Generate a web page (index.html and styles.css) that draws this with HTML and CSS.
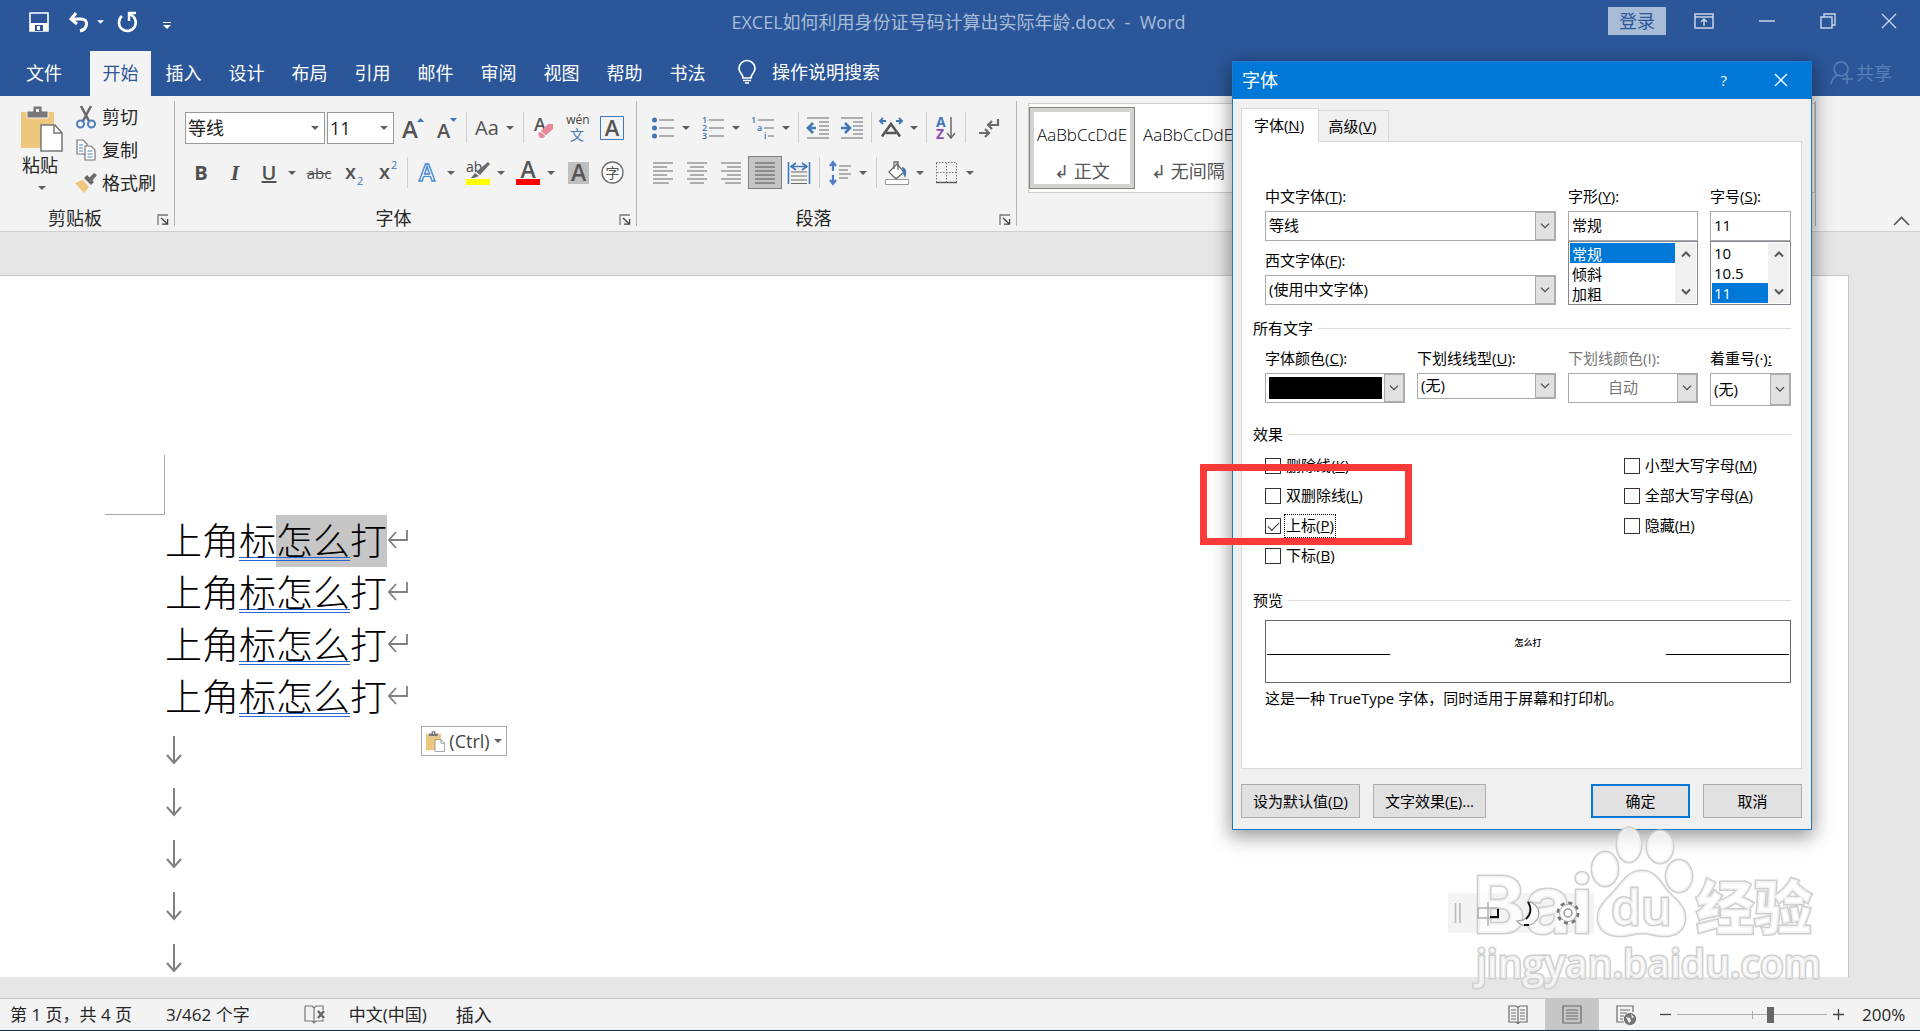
FILE: index.html
```html
<!DOCTYPE html>
<html lang="zh-CN">
<head>
<meta charset="utf-8">
<title>EXCEL如何利用身份证号码计算出实际年龄.docx - Word</title>
<link rel="stylesheet" href="styles.css">
</head>
<body>
<svg class="defs" width="0" height="0" aria-hidden="true">
  <symbol id="down" viewBox="0 0 8 4"><path d="M0 0h8L4 4z" fill="#5f5f5f"/></symbol>
  <symbol id="chev" viewBox="0 0 10 6"><path d="M1 .7l4 4 4-4" fill="none" stroke="#444" stroke-width="1.2"/></symbol>
  <symbol id="scroll-up" viewBox="0 0 10 8"><path d="M1 6.5l4-4 4 4" fill="none" stroke="#555" stroke-width="2"/></symbol>
  <symbol id="scroll-down" viewBox="0 0 10 8"><path d="M1 1.5l4 4 4-4" fill="none" stroke="#555" stroke-width="2"/></symbol>
  <symbol id="launcher" viewBox="0 0 12 11"><path d="M1 11V1h10" fill="none" stroke="#777" stroke-width="1.3"/><path d="M4 4l6 5.6M5 10.2h5.6V5" fill="none" stroke="#444" stroke-width="1.3"/></symbol>
  <symbol id="return" viewBox="0 0 22 20"><path d="M20 1v10H2M9 3L2 11l7 8" fill="none" stroke="#7f7f7f" stroke-width="1.8"/></symbol>
  <symbol id="break" viewBox="0 0 18 30"><path d="M9 1v26M2 20l7 8 7-8" fill="none" stroke="#7f7f7f" stroke-width="2"/></symbol>
  <symbol id="clip" viewBox="0 0 42 46"><path d="M0 6h33v36H0z" fill="#eec77f"/><path d="M6 12V5h6V0h9v5h6v7z" fill="#777" stroke="#f3f3f3"/><path d="M15 3h3v3h-3z" fill="#f3f3f3"/><path d="M20 19h14l7 8v18H20z" fill="#fff" stroke="#777" stroke-width="1.5"/><path d="M33 19v8h8" fill="none" stroke="#777" stroke-width="1.5"/></symbol>
</svg>

<header class="titlebar">
  <div class="quick">
    <button class="plain" aria-label="保存"><svg width="20" height="20" viewBox="0 0 20 20"><path d="M1 1h18v18H1z" fill="none" stroke="#fff" stroke-width="1.6"/><path d="M1 11h18v8H1z" fill="#fff"/><path d="M6 13h8v6H6z" fill="#2b579a"/><path d="M8 14h3v4H8z" fill="#fff"/></svg></button>
    <button class="plain undo" aria-label="撤消"><svg width="21" height="20" viewBox="0 0 21 20"><path d="M8 1L3 7l6 5M3 7h10c8 0 7 10-1 12" fill="none" stroke="#fff" stroke-width="3"/></svg><svg width="7" height="4" viewBox="0 0 8 4"><path d="M0 0h8L4 4z" fill="#fff"/></svg></button>
    <button class="plain" aria-label="重复"><svg width="20" height="20" viewBox="0 0 20 20"><path d="M5 4a8.4 8.4 0 1 0 8-1.5" fill="none" stroke="#fff" stroke-width="2.6"/><path d="M19 1h-7v8" fill="none" stroke="#fff" stroke-width="2.4"/></svg></button>
    <button class="plain more" aria-label="自定义"><svg width="8" height="7" viewBox="0 0 8 7"><path d="M0 .5h8" stroke="#fff"/><path d="M0 3h8L4 7z" fill="#fff"/></svg></button>
  </div>
  <h1>EXCEL如何利用身份证号码计算出实际年龄.docx&nbsp; -&nbsp; Word</h1>
  <div class="window">
    <button class="login">登录</button>
    <button class="plain" aria-label="功能区显示选项"><svg width="20" height="16" viewBox="0 0 20 16" fill="none" stroke="#c9d5e6" stroke-width="1.5"><path d="M1 1h18v14H1zM1 4h18M10 13V6M7 9l3-3 3 3"/></svg></button>
    <button class="plain" aria-label="最小化"><svg width="16" height="16" viewBox="0 0 16 16"><path d="M0 8h16" stroke="#c9d5e6" stroke-width="1.5"/></svg></button>
    <button class="plain" aria-label="还原"><svg width="16" height="16" viewBox="0 0 16 16" fill="none" stroke="#c9d5e6" stroke-width="1.4"><path d="M1 4h11v11H1zM4 4V1h11v11h-3"/></svg></button>
    <button class="plain" aria-label="关闭"><svg width="16" height="16" viewBox="0 0 16 16"><path d="M1 1l14 14M15 1L1 15" stroke="#c9d5e6" stroke-width="1.4"/></svg></button>
  </div>
</header>

<nav class="tabs">
  <button class="tab file">文件</button>
  <button class="tab active">开始</button>
  <button class="tab">插入</button>
  <button class="tab">设计</button>
  <button class="tab">布局</button>
  <button class="tab">引用</button>
  <button class="tab">邮件</button>
  <button class="tab">审阅</button>
  <button class="tab">视图</button>
  <button class="tab">帮助</button>
  <button class="tab">书法</button>
  <button class="tellme"><svg width="18" height="24" viewBox="0 0 18 24" fill="none" stroke="#fff" stroke-width="1.7"><path d="M5 18c0-4-4-5-4-9.500a8 8 0 0 1 16 0C17 13 13 14 13 18zM5 20.500h8M7 23h4"/></svg>操作说明搜索</button>
  <button class="share"><svg width="24" height="24" viewBox="0 0 24 24" fill="none" stroke="#5b7fb5" stroke-width="1.5"><circle cx="11" cy="8" r="7"/><path d="M1 23c1-5 4-8 7-9M17 13v10M12 18h11"/></svg>共享</button>
</nav>

<section class="ribbon">
  <div class="group clipboard">
    <div class="clip-body">
      <button class="plain paste"><svg width="42" height="46"><use href="#clip"/></svg><span>粘贴</span><svg width="8" height="4"><use href="#down"/></svg></button>
      <div class="commands">
        <button class="plain"><svg width="20" height="23" viewBox="0 0 20 23"><path d="M5 0l8 15M15 0L7 15" stroke="#6a6a6a" stroke-width="2.6"/><g fill="none" stroke="#4a7ebb" stroke-width="2"><circle cx="4.500" cy="18" r="3.500"/><circle cx="15.500" cy="18" r="3.500"/></g></svg>剪切</button>
        <button class="plain"><svg width="20" height="22" viewBox="0 0 20 22" fill="#fff" stroke="#777" stroke-width="1.2"><path d="M1 1h6l4 4v10H1z"/><path d="M9 7h6l4 4v10H9z"/><path d="M3 6h4M3 9h4M3 12h4M11.500 12h5M11.500 15h5M11.500 18h5" stroke="#4a7ebb"/></svg>复制</button>
        <button class="plain"><svg width="22" height="20" viewBox="0 0 22 20"><path d="M0 10l8-3 6 7-5 6z" fill="#eec77f"/><path d="M9 5l3-3 7 7-3 3zM14 5l5-5 3 2-5 6z" fill="#6a6a6a"/></svg>格式刷</button>
      </div>
    </div>
    <footer><span>剪贴板</span><button class="plain" aria-label="剪贴板设置"><svg width="12" height="11"><use href="#launcher"/></svg></button></footer>
  </div>

  <div class="group font">
    <div class="row">
      <label class="rcombo face"><select aria-label="字体"><option>等线</option></select><svg width="8" height="4"><use href="#down"/></svg></label>
      <label class="rcombo size"><select aria-label="字号"><option>11</option></select><svg width="8" height="4"><use href="#down"/></svg></label>
      <button class="tool" aria-label="增大字号"><svg width="24" height="26"><text x="2" y="23" class="glyph" font-size="24">A</text><path d="M17 7h7l-3.500-4z" fill="#3f78b5"/></svg></button>
      <button class="tool" aria-label="减小字号"><svg width="24" height="26"><text x="3" y="23" class="glyph" font-size="20">A</text><path d="M16 3h7l-3.500 4z" fill="#3f78b5"/></svg></button>
      <i class="sep"></i>
      <button class="tool split"><span class="aa">Aa</span><svg width="8" height="4"><use href="#down"/></svg></button>
      <i class="sep"></i>
      <button class="tool" aria-label="清除格式"><svg width="22" height="24" viewBox="0 0 22 24"><text x="1" y="15" class="glyph" font-size="18">A</text><path d="M5 18L15 8h5v5L10 22H7z" fill="#e8899b"/><path d="M7 15l6 5" stroke="#fff"/></svg></button>
      <button class="tool" aria-label="拼音指南"><svg width="24" height="27"><text x="12" y="10" text-anchor="middle" font-size="12" fill="#444">wén</text><text x="11" y="26" text-anchor="middle" font-size="14" fill="#3f78b5">文</text></svg></button>
      <button class="tool" aria-label="字符边框"><svg width="24" height="24"><path d="M.5.5h23v23H.5z" fill="none" stroke="#3f78b5"/><text x="12" y="20" text-anchor="middle" class="glyph" font-size="22">A</text></svg></button>
    </div>
    <div class="row">
      <button class="tool bold">B</button>
      <button class="tool italic">I</button>
      <button class="tool split uline"><u>U</u><svg width="8" height="4"><use href="#down"/></svg></button>
      <button class="tool strike"><s>abc</s></button>
      <button class="tool" aria-label="下标"><svg width="24" height="26"><text x="4" y="19" class="glyph" font-size="20">x</text><text x="16" y="25" font-size="11" fill="#3f78b5">2</text></svg></button>
      <button class="tool" aria-label="上标"><svg width="24" height="26"><text x="4" y="19" class="glyph" font-size="20">x</text><text x="16" y="9" font-size="11" fill="#3f78b5">2</text></svg></button>
      <i class="sep"></i>
      <button class="tool split" aria-label="文本效果"><svg width="22" height="24"><text x="10" y="20" text-anchor="middle" font-size="24" font-weight="600" fill="#fff" stroke="#4a8ad0" stroke-width="1.4">A</text></svg><svg width="8" height="4"><use href="#down"/></svg></button>
      <button class="tool split" aria-label="突出显示"><svg width="24" height="26"><text x="0" y="12" font-size="14" fill="#444">ab</text><path d="M22 2l2 2-10 11-4-3zM9 13l4 3-5 2H5z" fill="#6a6a6a"/><path d="M0 19h24v6H0z" fill="#ff0"/></svg><svg width="8" height="4"><use href="#down"/></svg></button>
      <button class="tool split" aria-label="字体颜色"><svg width="24" height="26"><text x="12" y="18" text-anchor="middle" class="glyph" font-size="23">A</text><path d="M0 19h24v6H0z" fill="red"/></svg><svg width="8" height="4"><use href="#down"/></svg></button>
      <button class="tool" aria-label="字符底纹"><svg width="21" height="22"><path d="M0 0h21v22H0z" fill="#bfbfbf"/><text x="10.500" y="19" text-anchor="middle" class="glyph" font-size="23">A</text></svg></button>
      <button class="tool" aria-label="带圈字符"><svg width="23" height="23"><circle cx="11.500" cy="11.500" r="10.500" fill="#fff" stroke="#6a6a6a" stroke-width="1.3"/><text x="11.500" y="17" text-anchor="middle" font-size="14" fill="#555">字</text></svg></button>
    </div>
    <footer><span>字体</span><button class="plain" aria-label="字体设置"><svg width="12" height="11"><use href="#launcher"/></svg></button></footer>
  </div>

  <div class="group para">
    <div class="row">
      <button class="tool split" aria-label="项目符号"><svg width="22" height="22" viewBox="0 0 22 22"><g fill="#3f78b5"><circle cx="2.500" cy="3" r="2.500"/><circle cx="2.500" cy="11" r="2.500"/><circle cx="2.500" cy="19" r="2.500"/></g><path d="M7 3h15M7 11h15M7 19h15" stroke="#6a6a6a" stroke-width="1.2"/></svg><svg width="8" height="4"><use href="#down"/></svg></button>
      <button class="tool split" aria-label="编号"><svg width="22" height="24" viewBox="0 0 22 24"><g font-size="9" font-weight="600" fill="#3f78b5"><text x="0" y="7">1</text><text x="0" y="15">2</text><text x="0" y="23">3</text></g><path d="M7 4h15M7 12h15M7 20h15" stroke="#6a6a6a" stroke-width="1.2"/></svg><svg width="8" height="4"><use href="#down"/></svg></button>
      <button class="tool split" aria-label="多级列表"><svg width="24" height="24" viewBox="0 0 24 24"><g font-size="9" font-weight="600" fill="#3f78b5"><text x="0" y="7">1</text><text x="6" y="15">a</text><text x="13" y="23">i</text></g><path d="M7 4h16M13 12h10M17 20h6" stroke="#6a6a6a" stroke-width="1.2"/></svg><svg width="8" height="4"><use href="#down"/></svg></button>
      <i class="sep"></i>
      <button class="tool" aria-label="减少缩进"><svg width="22" height="22" viewBox="0 0 22 22"><path d="M0 1h22M12 5h10M12 9h10M12 13h10M12 17h10M0 21h22" stroke="#6a6a6a" stroke-width="1.2"/><path d="M6 6l-5 5 5 5M1 11h8" fill="none" stroke="#3f78b5" stroke-width="2.6"/></svg></button>
      <button class="tool" aria-label="增加缩进"><svg width="22" height="22" viewBox="0 0 22 22"><path d="M0 1h22M12 5h10M12 9h10M12 13h10M12 17h10M0 21h22" stroke="#6a6a6a" stroke-width="1.2"/><path d="M4 6l5 5-5 5M0 11h8" fill="none" stroke="#3f78b5" stroke-width="2.6"/></svg></button>
      <i class="sep"></i>
      <button class="tool split" aria-label="中文版式"><svg width="24" height="22" viewBox="0 0 24 22"><path d="M4 1L1 4l3 3M1 4h6M20 1l3 3-3 3M23 4h-6" fill="none" stroke="#3f78b5" stroke-width="1.8"/><path d="M3 19.500L12 7l9 12.500M7 16h10" fill="none" stroke="#555" stroke-width="2.6"/></svg><svg width="8" height="4"><use href="#down"/></svg></button>
      <i class="sep"></i>
      <button class="tool" aria-label="排序"><svg width="20" height="26" viewBox="0 0 20 26"><text x="0" y="12" font-size="14" font-weight="700" fill="#3f78b5">A</text><text x="0" y="24" font-size="14" font-weight="700" fill="#8a4fae">Z</text><path d="M15 2v21M11 18l4 5 4-5" fill="none" stroke="#6a6a6a" stroke-width="1.5"/></svg></button>
      <i class="sep"></i>
      <button class="tool marks" aria-label="显示编辑标记"><svg width="22" height="20" viewBox="0 0 22 20" fill="none" stroke="#6a6a6a" stroke-width="2.2"><path d="M20 1v6h-9M14 3l-4 4 4 4M1 15h9M7 11l4 4-4 4"/></svg></button>
    </div>
    <div class="row">
      <button class="tool" aria-label="左对齐"><svg width="20" height="22" viewBox="0 0 20 22" stroke="#6a6a6a" stroke-width="1.2"><path d="M0 1h20M0 5h14M0 9h20M0 13h14M0 17h20M0 21h16"/></svg></button>
      <button class="tool" aria-label="居中"><svg width="20" height="22" viewBox="0 0 20 22" stroke="#6a6a6a" stroke-width="1.2"><path d="M0 1h20M3 5h14M0 9h20M3 13h14M0 17h20M3 21h14"/></svg></button>
      <button class="tool" aria-label="右对齐"><svg width="20" height="22" viewBox="0 0 20 22" stroke="#6a6a6a" stroke-width="1.2"><path d="M0 1h20M6 5h14M0 9h20M6 13h14M0 17h20M4 21h16"/></svg></button>
      <button class="tool pressed" aria-label="两端对齐"><svg width="20" height="22" viewBox="0 0 20 22" stroke="#555" stroke-width="1.2"><path d="M0 1h20M0 5h20M0 9h20M0 13h20M0 17h20M0 21h20"/></svg></button>
      <button class="tool" aria-label="分散对齐"><svg width="22" height="22" viewBox="0 0 22 22"><path d="M.5 0v22M21.500 0v22M8 1L3 4.500 8 8M14 1l5 3.500L14 8M3 4.500h16" fill="none" stroke="#3f78b5" stroke-width="1.6"/><path d="M3 10h16M3 14h16M3 18h16M3 21.500h16" stroke="#6a6a6a" stroke-width="1.2"/></svg></button>
      <i class="sep"></i>
      <button class="tool split" aria-label="行距"><svg width="22" height="24" viewBox="0 0 22 24"><path d="M4 10V2M1 5l3-4 3 4M4 14v8M1 19l3 4 3-4" fill="none" stroke="#4f7ec4" stroke-width="2.2"/><path d="M10 5h12M10 9h9M10 13h12M10 17h9" stroke="#6a6a6a" stroke-width="1.2"/></svg><svg width="8" height="4"><use href="#down"/></svg></button>
      <i class="sep"></i>
      <button class="tool split" aria-label="底纹"><svg width="24" height="24" viewBox="0 0 24 24"><path d="M4 11l8-8 7 8-8 7z" fill="#fff" stroke="#6a6a6a" stroke-width="1.3"/><path d="M9 8V1h4v8" fill="none" stroke="#6a6a6a" stroke-width="1.3"/><path d="M17 6c5 1 5 6 3 11l-2-5z" fill="#3f78b5"/><path d="M.5 18.500h23v5H.5z" fill="#fff" stroke="#999"/></svg><svg width="8" height="4"><use href="#down"/></svg></button>
      <button class="tool split" aria-label="边框"><svg width="22" height="22" viewBox="0 0 22 22" fill="none" stroke="#777"><path d="M0 .5h21M.5 1v20M20.500 1v20M10.500 1v20M1 10.500h20" stroke-dasharray="1.500 1.500"/><path d="M0 20.500h21" stroke="#555" stroke-width="1.4"/></svg><svg width="8" height="4"><use href="#down"/></svg></button>
    </div>
    <footer><span>段落</span><button class="plain" aria-label="段落设置"><svg width="12" height="11"><use href="#launcher"/></svg></button></footer>
  </div>

  <div class="group styles">
    <div class="gallery">
      <button class="style chosen"><span>AaBbCcDdE</span><small>↲ 正文</small></button>
      <button class="style"><span>AaBbCcDdE</span><small>↲ 无间隔</small></button>
    </div>
  </div>
  <div class="collapse"><button class="plain" aria-label="折叠功能区"><svg width="17" height="10" viewBox="0 0 17 10"><path d="M1 9l7.500-7.500L16 9" fill="none" stroke="#555" stroke-width="1.6"/></svg></button></div>
</section>

<main class="desk">
  <article class="sheet">
    <div class="corner"></div>
    <p>上角<span class="gram">标</span><mark><span class="gram">怎么</span>打</mark><svg width="22" height="20"><use href="#return"/></svg></p>
    <p>上角<span class="gram">标怎么</span>打<svg width="22" height="20"><use href="#return"/></svg></p>
    <p>上角<span class="gram">标怎么</span>打<svg width="22" height="20"><use href="#return"/></svg></p>
    <p>上角<span class="gram">标怎么</span>打<svg width="22" height="20"><use href="#return"/></svg></p>
    <p class="brk"><svg width="18" height="30"><use href="#break"/></svg></p>
    <p class="brk"><svg width="18" height="30"><use href="#break"/></svg></p>
    <p class="brk"><svg width="18" height="30"><use href="#break"/></svg></p>
    <p class="brk"><svg width="18" height="30"><use href="#break"/></svg></p>
    <p class="brk"><svg width="18" height="30"><use href="#break"/></svg></p>
    <button class="paste-tag"><svg width="19" height="21"><use href="#clip"/></svg>(Ctrl)<svg width="8" height="4"><use href="#down"/></svg></button>
  </article>
</main>

<footer class="status">
  <span class="pages">第 1 页，共 4 页</span>
  <span class="words">3/462 个字</span>
  <svg class="proof" width="22" height="19" viewBox="0 0 22 19"><path d="M1 1h7l2 2 2-2h7v4M19 14v2h-7l-2 2-2-2H1V1M10 3v15" fill="none" stroke="#777" stroke-width="1.2"/><path d="M14 6l6 7M20 6l-6 7" stroke="#666" stroke-width="2.4"/></svg>
  <span class="lang">中文(中国)</span>
  <span class="mode">插入</span>
  <div class="views">
    <button class="view" aria-label="阅读视图"><svg width="20" height="19" viewBox="0 0 20 19" fill="none" stroke="#6a6a6a" stroke-width="1.2"><path d="M1 1h7l2 1.500L12 1h7v16h-7l-2 1.500L8 17H1zM10 2v16M3 5h5M3 8h5M3 11h5M3 14h5M12 5h5M12 8h5M12 11h5M12 14h5"/></svg></button>
    <button class="view on" aria-label="页面视图"><svg width="20" height="19" viewBox="0 0 20 19" fill="none" stroke="#6a6a6a" stroke-width="1.2"><path d="M1 1h18v17H1zM4 5h12M4 8h12M4 11h12M4 14h12"/></svg></button>
    <button class="view" aria-label="Web 版式"><svg width="20" height="20" viewBox="0 0 20 20" fill="none" stroke="#6a6a6a" stroke-width="1.2"><path d="M17 7V1H1v16h7M4 5h10M4 8h7M4 11h4M4 14h3"/><circle cx="14" cy="14" r="5.500" fill="#777"/><path d="M10 12l4 1 1 3-2 2zM15 9l3 3-2 1z" fill="#f3f3f3" stroke="none"/></svg></button>
  </div>
  <div class="zoom">
    <button class="plain" aria-label="缩小"><svg width="11" height="11"><path d="M0 5.500h11" stroke="#444" stroke-width="1.3"/></svg></button>
    <span class="track"><input type="range" min="0" max="100" value="63" aria-label="缩放"></span>
    <button class="plain" aria-label="放大"><svg width="11" height="11"><path d="M0 5.500h11M5.500 0v11" stroke="#444" stroke-width="1.3"/></svg></button>
    <span class="percent">200%</span>
  </div>
</footer>

<form class="dialog">
  <header><h2>字体</h2><button type="button" class="plain help">?</button><button type="button" class="plain" aria-label="关闭"><svg width="14" height="14" viewBox="0 0 14 14"><path d="M1 1l12 12M13 1L1 13" stroke="#fff" stroke-width="1.4"/></svg></button></header>
  <div class="pages-bar">
    <button type="button" class="on">字体(<u>N</u>)</button><button type="button">高级(<u>V</u>)</button>
  </div>
  <div class="panel">
    <div class="fields top">
      <div class="col">
        <label for="cn">中文字体(<u>T</u>):</label>
        <div class="combo"><select id="cn"><option>等线</option></select><svg><use href="#chev"/></svg></div>
        <label for="en" class="next">西文字体(<u>F</u>):</label>
        <div class="combo"><select id="en"><option>(使用中文字体)</option></select><svg><use href="#chev"/></svg></div>
      </div>
      <div class="col">
        <label for="shape">字形(<u>Y</u>):</label>
        <input id="shape" type="text" value="常规">
        <div class="list"><select size="3" aria-label="字形列表"><option selected>常规</option><option>倾斜</option><option>加粗</option></select><div class="bar"><svg width="10" height="8"><use href="#scroll-up"/></svg><svg width="10" height="8"><use href="#scroll-down"/></svg></div></div>
      </div>
      <div class="col">
        <label for="pt">字号(<u>S</u>):</label>
        <input id="pt" type="text" value="11">
        <div class="list"><select size="3" aria-label="字号列表"><option>10</option><option>10.5</option><option selected>11</option></select><div class="bar"><svg width="10" height="8"><use href="#scroll-up"/></svg><svg width="10" height="8"><use href="#scroll-down"/></svg></div></div>
      </div>
    </div>
    <h3>所有文字</h3>
    <div class="fields four">
      <div class="col"><label for="color">字体颜色(<u>C</u>):</label><div class="combo"><select id="color" class="swatch"><option></option></select><svg><use href="#chev"/></svg></div></div>
      <div class="col"><label for="ul">下划线线型(<u>U</u>):</label><div class="combo low"><select id="ul"><option>(无)</option></select><svg><use href="#chev"/></svg></div></div>
      <div class="col off"><label for="ulc">下划线颜色(I):</label><div class="combo"><select id="ulc" disabled><option>自动</option></select><svg><use href="#chev"/></svg></div></div>
      <div class="col"><label for="dot">着重号(·)<u>:</u></label><div class="combo tall"><select id="dot"><option>(无)</option></select><svg><use href="#chev"/></svg></div></div>
    </div>
    <h3 class="effects-title">效果</h3>
    <div class="effects">
      <div>
        <label><input type="checkbox"><span>删除线(<u>K</u>)</span></label>
        <label><input type="checkbox"><span>双删除线(<u>L</u>)</span></label>
        <label><input type="checkbox" checked><span class="focus">上标(<u>P</u>)</span></label>
        <label><input type="checkbox"><span>下标(<u>B</u>)</span></label>
      </div>
      <div>
        <label><input type="checkbox"><span>小型大写字母(<u>M</u>)</span></label>
        <label><input type="checkbox"><span>全部大写字母(<u>A</u>)</span></label>
        <label><input type="checkbox"><span>隐藏(<u>H</u>)</span></label>
      </div>
    </div>
    <h3 class="preview-title">预览</h3>
    <div class="preview"><i></i><span>怎么打</span><i></i></div>
    <p class="note">这是一种 TrueType 字体，同时适用于屏幕和打印机。</p>
  </div>
  <div class="actions">
    <button type="button" class="btn">设为默认值(<u>D</u>)</button>
    <button type="button" class="btn">文字效果(<u>E</u>)...</button>
    <button type="button" class="btn main">确定</button>
    <button type="button" class="btn cancel">取消</button>
  </div>
</form>

<div class="redbox"></div>

<div class="ime">
  <svg width="146" height="40" viewBox="0 0 146 40"><path d="M7.500 10v20M12 10v20" stroke="#bbb" stroke-width="1.6"/></svg>
</div>
<svg class="mark" width="380" height="180" viewBox="0 0 380 180">
  <g class="stamp">
    <text x="13" y="113" font-size="79" class="bai">Bai</text>
    <ellipse cx="145" cy="49" rx="13" ry="17"/><ellipse cx="169" cy="25" rx="12" ry="17"/><ellipse cx="200" cy="27" rx="13" ry="16"/><ellipse cx="219" cy="56" rx="13" ry="16"/>
    <path d="M182 51c15 0 19 14 28 23 9 8 15 14 15 24 0 12-9 18-21 18-9 0-13-3-22-3s-13 3-22 3c-12 0-22-6-22-18 0-10 6-16 14-24 9-9 15-23 30-23z"/>
    <text x="151" y="105" font-size="48" class="du">du</text>
    <text x="236" y="109" font-size="58" class="jing">经验</text>
    <text x="16" y="158" font-size="39" class="url">jingyan.baidu.com</text>
  </g>
  <g transform="translate(-12 73)"><path d="M30 15h20v10H30zM40 9v24" fill="none" stroke="#b0b0b0" stroke-width="1.5"/><path d="M42 24h8v-8" fill="none" stroke="#111" stroke-width="2"/><path d="M80 9c4 6 2 19-11 19 6 8 21 5 22-8 0-5-5-11-11-11z" fill="#fff" stroke="#aaa" stroke-width="1.3"/><path d="M80 9c4 6 3 13-2 17M76 32h5" fill="none" stroke="#111" stroke-width="1.8"/><circle cx="120" cy="20" r="10" fill="none" stroke="#777" stroke-width="3" stroke-dasharray="4 3.850"/><circle cx="120" cy="20" r="8.500" fill="#fff" stroke="#aaa"/><circle cx="120" cy="20" r="4" fill="none" stroke="#999" stroke-width="1.5"/></g>
</svg>
</body>
</html>
```
FILE: styles.css
```css
* { box-sizing: border-box; }
body {
  margin: 0;
  position: relative;
  height: 100vh;
  display: flex;
  flex-direction: column;
  background: #e6e6e6;
  color: #262626;
  font: 18px/24px "Open Sans", "Noto Sans CJK SC", sans-serif;
  overflow: hidden;
}
button, input, select { font: inherit; color: inherit; }
button { border: 0; background: none; padding: 0; white-space: nowrap; }
svg { display: block; flex: none; overflow: visible; }
.defs { position: absolute; }
h1, h2, h3, p { margin: 0; font-weight: 400; font-size: inherit; }
.plain { display: flex; align-items: center; }

/* Title bar */
.titlebar {
  height: 51px;
  flex: none;
  background: #2b579a;
  color: #a9bcd8;
  display: grid;
  grid-template-columns: 1fr auto 1fr;
  align-items: start;
}
.quick { display: flex; padding: 12px 0 0 29px; gap: 19px; }
.undo { gap: 8px; }
.quick button:nth-child(3) { margin-left: -6px; }
.more { margin-left: 7px; padding-top: 6px; }
h1 { padding: 10px 3px 0 0; }
.window { display: flex; justify-content: flex-end; align-items: center; gap: 45px; padding: 7px 23px 0 0; }
.login { width: 58px; height: 28px; background: #a8bbd7; color: #2b579a; margin-right: -17px; }

/* Tab strip */
.tabs { height: 45px; flex: none; background: #2b579a; color: #fff; display: flex; gap: 2px; }
.tab { width: 61px; padding-bottom: 2px; }
.file { width: 88px; }
.active { background: #f3f3f3; color: #2b579a; }
.tellme { display: flex; align-items: center; gap: 16px; margin-left: 18px; padding-bottom: 3px; }
.share { display: flex; align-items: center; gap: 2px; margin-left: auto; padding: 0 28px 2px 0; color: #5b7fb5; }

/* Ribbon */
.ribbon { height: 136px; flex: none; background: #f3f3f3; border-bottom: 1px solid #cfcfcf; display: flex; padding: 5px 0; }
.group { border-right: 1px solid #b4b4b4; display: flex; flex-direction: column; padding-top: 10px; }
.group > footer { margin-top: auto; height: 16px; line-height: 16px; display: flex; justify-content: center; align-items: center; position: relative; }
.group > footer button { position: absolute; right: 5px; bottom: 1px; }
.clipboard { width: 175px; padding-top: 0; }
.clipboard > footer { padding-right: 24px; }
.clip-body { display: flex; }
.paste { flex-direction: column; width: 75px; padding: 5px 0 0 9px; }
.paste span { line-height: 26px; padding-right: 4px; }
.paste > svg:last-child { margin: 8px 0 0 0; }
.commands { display: flex; flex-direction: column; }
.commands button { height: 33px; gap: 5px; padding-bottom: 1px; }
.commands svg { width: 22px; }
.font { width: 462px; padding-left: 9px; }
.font > footer { padding-right: 33px; }
.para { width: 380px; padding-left: 9px; }
.para > footer { padding-right: 35px; }
.row { display: flex; align-items: center; height: 33px; margin-bottom: 12px; }
.row + .row { margin-bottom: 0; }
.tool { width: 34px; height: 33px; display: flex; align-items: center; justify-content: center; color: #505050; }
.split { width: 50px; display: grid; grid-template-columns: 34px 12px; justify-content: start; justify-items: center; }
.pressed { background: #c5c5c5; border: 1px solid #7f7f7f; }
.sep { width: 1px; height: 31px; background: #d0d0d0; margin: 0 3px; flex: none; }
.para .row:first-child .sep { margin: 0 2px; }
.marks { margin-left: 4px; }
.glyph { fill: #555; font-weight: 600; }
.aa { font-size: 20px; }
.bold { font-weight: 700; font-size: 20px; }
.italic { font: italic 700 22px "Liberation Serif", serif; }
.uline u { font-weight: 600; font-size: 20px; }
.strike { font-size: 15px; }
.rcombo { height: 32px; background: #fff; border: 1px solid #999; display: flex; align-items: center; padding-right: 5px; margin-right: 2px; }
.rcombo select { appearance: none; border: 0; background: none; padding: 0 2px; flex: 1; min-width: 0; color: #222; }
.face { width: 140px; margin-left: 1px; }
.size { width: 67px; margin-right: 1px; }
.styles { flex: 1; padding: 2px 0 0 11px; }
.gallery { height: 90px; background: #fff; border: 1px solid #cfcfcf; display: flex; align-items: center; overflow: hidden; }
.style { width: 106px; height: 82px; display: flex; flex-direction: column; align-items: center; justify-content: center; gap: 12px; padding-top: 10px; color: #555; }
.style span { font-size: 17px; font-weight: 300; color: #000; }
.style small { font-size: 18px; }
.chosen { border: 1px solid #85857f; box-shadow: inset 0 0 0 4px #d2d2d0; }
.collapse { width: 104px; display: flex; justify-content: flex-end; align-items: flex-end; padding: 0 10px 0 0; }

/* Document */
.desk { flex: 1; min-height: 0; padding: 43px 71px 21px 0; display: flex; }
.sheet { flex: 1; background: #fff; border: solid #c6c6c6; border-width: 1px 1px 0 0; position: relative; padding-left: 165px; color: #000; font-family: "Noto Sans CJK SC Light", "Noto Sans CJK SC DemiLight", "Noto Sans CJK SC", sans-serif; font-size: 37px; line-height: 48px; font-weight: 300; overflow: hidden; }
.corner { width: 60px; height: 60px; margin: 179px 0 0 -60px; border: solid #a6a6a6; border-width: 0 1px 1px 0; }
.sheet p { height: 52px; display: flex; align-items: flex-start; }
.sheet p svg { margin-top: 14px; }
.sheet .brk svg { margin-top: 12px; }
.gram { display: inline-block; height: 46px; border-bottom: 4px double #2a63d6; vertical-align: top; }
mark { background: #c6c6c6; color: inherit; height: 52px; }
.paste-tag { position: absolute; left: 421px; top: 450px; height: 30px; width: 86px; border: 1px solid #ababab; background: #fff; display: flex; align-items: center; justify-content: center; gap: 4px; font: 18px/24px "Open Sans", sans-serif; color: #444; }

/* Status bar */
.status { height: 33px; flex: none; background: #f3f3f3; border-top: 1px solid #c6c6c6; border-bottom: 1px solid #0a2f4f; display: flex; align-items: center; font-size: 17px; padding-left: 10px; }
.words { margin-left: 34px; }
.proof { margin-left: 54px; }
.lang { margin-left: 23px; }
.mode { margin-left: 29px; font-size: 18px; }
.views { display: flex; margin-left: auto; align-self: stretch; }
.view { width: 54px; display: flex; align-items: center; justify-content: center; }
.view.on { background: #c6c6c6; }
.zoom { display: flex; align-items: center; gap: 6px; padding: 0 15px 0 7px; }
.percent { width: 43px; margin-left: 12px; }
.track { width: 150px; height: 16px; display: flex; background: linear-gradient(#ababab, #ababab) 75px 50% / 1px 8px no-repeat, linear-gradient(#ababab, #ababab) 0 50% / 100% 1px no-repeat; }
.track input { appearance: none; width: 100%; margin: 0; background: none; }
.track input::-webkit-slider-thumb { appearance: none; width: 7px; height: 16px; background: #666; }

/* Font dialog */
.dialog { position: absolute; top: 61px; right: 108px; width: 580px; background: #f0f0f0; border: 1px solid #1979ca; box-shadow: 0 5px 18px 2px rgba(0, 0, 0, .4); color: #000; font-size: 15px; line-height: 20px; }
.dialog > header { height: 37px; background: #0078d7; color: #fff; display: flex; align-items: center; padding: 0 23px 1px 9px; }
.dialog h2 { font-size: 18px; margin-right: auto; }
.help { margin-right: 47px; }
.pages-bar { display: flex; align-items: flex-end; padding: 9px 0 0 8px; }
.pages-bar button { height: 31px; width: 70px; border: 1px solid #d9d9d9; border-width: 1px 1px 0 0; padding: 0 2px 1px 0; }
.pages-bar .on { height: 34px; width: 78px; background: #fff; border-left-width: 1px; margin-bottom: -1px; position: relative; }
.panel { height: 628px; margin: 0 9px 0 8px; background: #fff; border: 1px solid #d9d9d9; padding: 44px 10px 0 23px; }
.fields { display: grid; gap: 12px; }
.top { grid-template-columns: 1fr 130px 81px; }
.four { grid-template-columns: 140px 1fr 130px 81px; height: 58px; }
.col { display: flex; flex-direction: column; }
.col label { margin-bottom: 5px; white-space: nowrap; }
.col .next { margin-top: 9px; }
.combo { height: 30px; border: 1px solid #ababab; background: #fff; display: flex; align-items: stretch; }
.combo.low { height: 26px; }
.combo.tall { height: 33px; }
.combo select { appearance: none; border: 0; background: none; padding: 0 3px 2px; flex: 1; min-width: 0; opacity: 1; }
.combo .swatch { background: #000; margin: 3px 2px 3px 3px; border-radius: 0; }
.combo svg { width: 20px; height: auto; padding: 0 4px; background: #e1e1e1; border: 1px solid #ababab; }
.off { color: #767676; }
.off select { text-align: center; text-align-last: center; color: #767676; }
.col input { height: 30px; width: 100%; border: 1px solid #ababab; padding: 0 3px 3px; background: #fff; }
.list { height: 64px; border: 1px solid #828790; padding: 1px; display: flex; background: #fff; }
.list select { appearance: none; border: 0; padding: 0; flex: 1; min-width: 0; height: 60px; overflow: hidden; scrollbar-width: none; background: #fff; outline: 0; border-radius: 0; }
.list option { height: 20px; min-height: 20px; padding: 0 2px; line-height: 18px; }
.list option:checked { background: linear-gradient(#0078d7, #0078d7); -webkit-text-fill-color: #fff; }
.bar { width: 21px; background: #f0f0f0; display: flex; flex-direction: column; justify-content: space-between; align-items: center; padding: 7px 0; }
h3 { display: flex; align-items: center; gap: 5px; margin: 13px 0 10px -12px; }
h3::after { content: ""; flex: 1; height: 1px; background: #dcdcdc; }
.effects-title { margin-top: 18px; margin-bottom: 7px; }
.preview-title { margin-top: 19px; margin-bottom: 10px; }
.effects { display: flex; justify-content: space-between; height: 120px; padding-right: 32px; }
.effects label { display: flex; align-items: center; height: 30px; gap: 3px; }
.effects span { padding: 0 1px 2px; border: 1px solid transparent; white-space: nowrap; }
.effects .focus { border: 1px dotted #000; }
.effects input { appearance: none; width: 16px; height: 16px; margin: 0; border: 1px solid #333; background: #fff; display: grid; place-items: center; }
.effects input:checked::after { content: ""; width: 10px; height: 5px; border: solid #333; border-width: 0 0 1px 1px; transform: translateY(-1px) rotate(-45deg); }
.preview { height: 63px; border: 1px solid #666; display: flex; justify-content: space-between; padding: 12px 1px 0; }
.preview i { width: 123px; height: 1px; background: #000; margin-top: 21px; }
.preview span { font-size: 9px; font-weight: 500; line-height: 20px; }
.note { margin-top: 5px; }
.actions { display: flex; padding: 15px 9px 11px 8px; gap: 13px; }
.btn { height: 34px; padding: 0 0 1px; border: 1px solid #adadad; background: #e1e1e1; width: 119px; }
.btn + .btn { width: 113px; }
.actions .main { width: 99px; margin-left: auto; border: 2px solid #0078d7; }
.actions .cancel { width: 99px; }

/* Overlays */
.redbox { position: absolute; top: 464px; right: 508px; width: 212px; height: 81px; border: 7px solid #fa3939; pointer-events: none; }
.ime { position: absolute; top: 893px; right: 326px; background: #f3f3f3; }
.mark { position: absolute; top: 820px; right: 80px; pointer-events: none; }
.stamp { fill: rgba(255, 255, 255, .7); stroke: #cfcfcf; stroke-width: 3; paint-order: stroke; }
.bai { font-family: Inter, sans-serif; font-weight: 700; }
.du { font-family: "Open Sans", sans-serif; font-weight: 600; }
.jing { font-family: "Noto Sans CJK SC", sans-serif; font-weight: 900; }
.url { font-family: "Open Sans", sans-serif; font-weight: 600; }
```
